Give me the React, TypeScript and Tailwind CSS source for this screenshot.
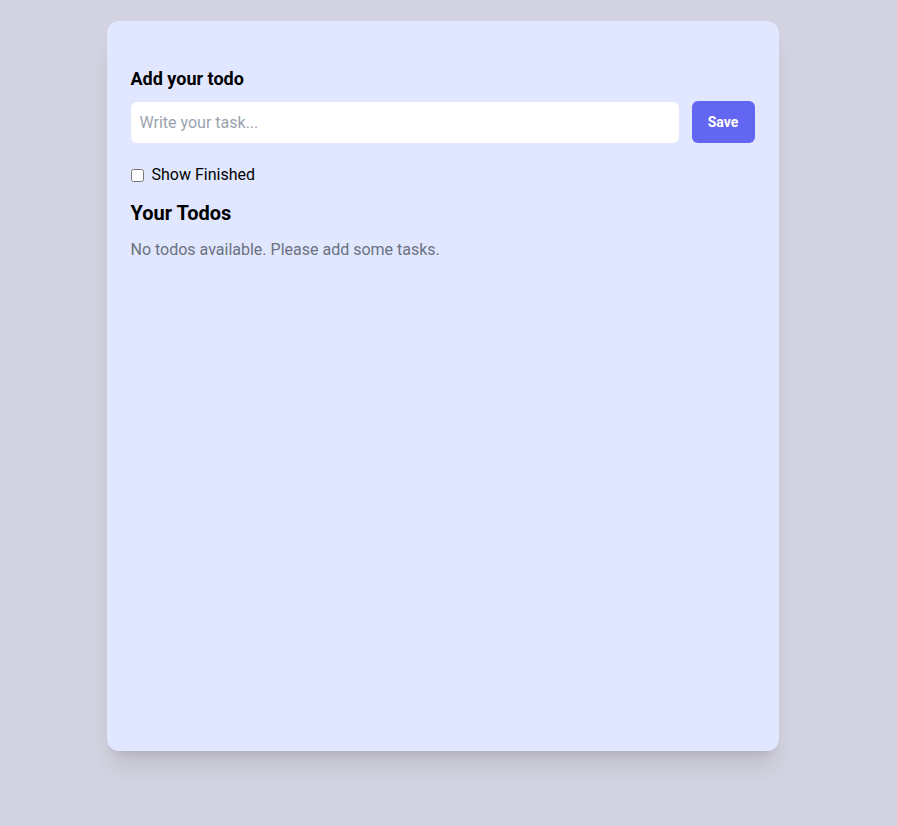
export default function App() {
  return (
    <div
      className="min-h-screen bg-[#d4d3e1] pt-[21px] pr-3"
      style={{ fontFamily: 'Roboto, "Noto Sans", sans-serif' }}
    >
      <div className="mx-auto h-[730px] w-[672px] rounded-xl bg-[#e0e7ff] px-6 pt-[44px] shadow-xl">
        <h2 className="text-lg font-bold leading-7 text-black">Add your todo</h2>
        <div className="mt-[8px] flex items-center gap-[13px]">
          <input
            type="text"
            placeholder="Write your task..."
            className="h-[41px] flex-1 rounded-md bg-white px-[9px] text-base text-black placeholder:text-[#9ca3af] outline-none"
          />
          <button className="h-[42px] w-[63px] rounded-md bg-[#6366f1] text-sm font-bold text-white">
            Save
          </button>
        </div>
        <label className="mt-[20px] flex items-center gap-2 text-base leading-6 text-black">
          <input type="checkbox" className="h-[13px] w-[13px]" />
          Show Finished
        </label>
        <h2 className="mt-[12px] text-xl font-bold leading-7 text-black">Your Todos</h2>
        <p className="mt-[11px] text-base leading-6 text-[#6b7280]">
          No todos available. Please add some tasks.
        </p>
      </div>
    </div>
  );
}
